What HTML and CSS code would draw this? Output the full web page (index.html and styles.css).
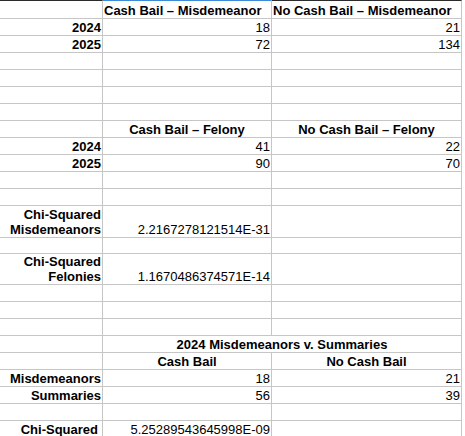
FILE: index.html
```html
<!DOCTYPE html>
<html>
<head>
<meta charset="utf-8">
<link rel="stylesheet" href="styles.css">
</head>
<body>
<div class="sheet">
  <div class="cell top"></div>
  <div class="cell top sel b">Cash Bail – Misdemeanor</div>
  <div class="cell top b">No Cash Bail – Misdemeanor</div>

  <div class="cell b r">2024</div><div class="cell r">18</div><div class="cell r">21</div>
  <div class="cell b r">2025</div><div class="cell r">72</div><div class="cell r">134</div>

  <div class="cell"></div><div class="cell"></div><div class="cell"></div>
  <div class="cell"></div><div class="cell"></div><div class="cell"></div>
  <div class="cell"></div><div class="cell"></div><div class="cell"></div>
  <div class="cell"></div><div class="cell"></div><div class="cell"></div>

  <div class="cell"></div><div class="cell b c">Cash Bail – Felony</div><div class="cell b c">No Cash Bail – Felony</div>
  <div class="cell b r">2024</div><div class="cell r">41</div><div class="cell r">22</div>
  <div class="cell b r">2025</div><div class="cell r">90</div><div class="cell r">70</div>

  <div class="cell"></div><div class="cell"></div><div class="cell"></div>
  <div class="cell"></div><div class="cell"></div><div class="cell"></div>

  <div class="cell b r">Chi-Squared<br>Misdemeanors</div><div class="cell r">2.2167278121514E-31</div><div class="cell"></div>
  <div class="cell"></div><div class="cell"></div><div class="cell"></div>
  <div class="cell b r">Chi-Squared<br>Felonies</div><div class="cell r">1.1670486374571E-14</div><div class="cell"></div>

  <div class="cell"></div><div class="cell"></div><div class="cell"></div>
  <div class="cell"></div><div class="cell"></div><div class="cell"></div>
  <div class="cell"></div><div class="cell"></div><div class="cell"></div>

  <div class="cell"></div><div class="cell b c span2">2024 Misdemeanors v. Summaries</div>
  <div class="cell"></div><div class="cell b c">Cash Bail</div><div class="cell b c">No Cash Bail</div>
  <div class="cell b r">Misdemeanors</div><div class="cell r">18</div><div class="cell r">21</div>
  <div class="cell b r">Summaries</div><div class="cell r">56</div><div class="cell r">39</div>
  <div class="cell"></div><div class="cell"></div><div class="cell"></div>
  <div class="cell b r trail">Chi-Squared</div><div class="cell r">5.25289543645998E-09</div><div class="cell"></div>
</div>
</body>
</html>
```
FILE: styles.css
```css
html, body {
  margin: 0;
  padding: 0;
  background: #ffffff;
}

body {
  font-family: "Liberation Sans", Arial, sans-serif;
  font-size: 13px;
  color: #000000;
  overflow: hidden;
}

.sheet {
  display: grid;
  grid-template-columns: 103px 169px 190px;
  grid-template-rows: 19px repeat(11, 17px) 32px 16px 31px repeat(9, 17px);
  width: 462px;
}

.cell {
  box-sizing: border-box;
  border-right: 1px solid #c6c6c6;
  border-bottom: 1px solid #c6c6c6;
  display: flex;
  flex-direction: column;
  justify-content: flex-end;
  padding: 0 1px;
  line-height: 15px;
  white-space: nowrap;
  overflow: hidden;
}

.top {
  border-top: 1px solid #2b2b2b;
}

.top.sel {
  border-top-color: #3d8bd6;
}

.b { font-weight: bold; }
.r { text-align: right; }
.c { text-align: center; }
.span2 { grid-column: span 2; }
.trail { padding-right: 4px; }
```
